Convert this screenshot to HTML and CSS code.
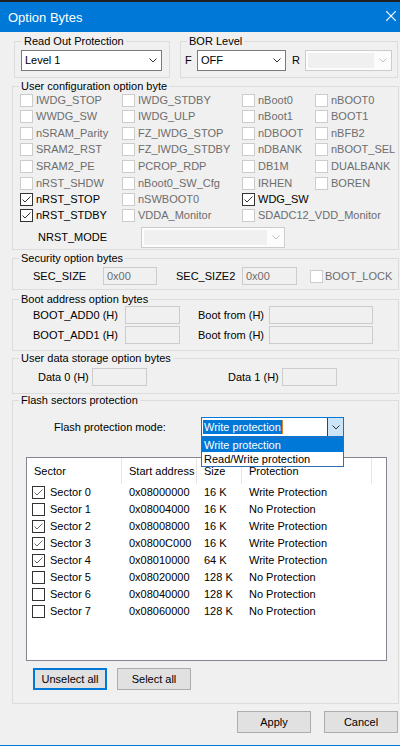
FILE: index.html
```html
<!DOCTYPE html>
<html lang="en">
<head>
    <meta charset="UTF-8">
    <meta name="viewport" content="width=device-width, initial-scale=1.0">
    <title>Option Bytes</title>
    <link rel="stylesheet" href="styles.css">
</head>
<body>
<div class="window">
    <div class="titlebar">
        <span class="title">Option Bytes</span>
        <svg class="close" width="10" height="10" viewBox="0 0 10 10"><path d="M0 0L10 10M10 0L0 10" stroke="#fff" stroke-width="1.2"/></svg>
    </div>

    <div class="panel">
        <div class="top-row">
            <div class="group rop">
                <div class="group-title">Read Out Protection</div>
                <div class="select rop-select">
                    <span>Level 1</span>
                    <svg width="8" height="5" viewBox="0 0 8 5"><polyline points="0.5,0.5 4,4 7.5,0.5" fill="none" stroke="#333"/></svg>
                </div>
            </div>
            <div class="group bor">
                <div class="group-title">BOR Level</div>
                <div class="bor-row">
                    <span class="bor-f-label">F</span>
                    <div class="select bor-f">
                        <span>OFF</span>
                        <svg width="8" height="5" viewBox="0 0 8 5"><polyline points="0.5,0.5 4,4 7.5,0.5" fill="none" stroke="#333"/></svg>
                    </div>
                    <span class="bor-r-label">R</span>
                    <div class="select disabled bor-r">
                        <span class="field"></span>
                        <svg width="8" height="5" viewBox="0 0 8 5"><polyline points="0.5,0.5 4,4 7.5,0.5" fill="none" stroke="#bfbfbf"/></svg>
                    </div>
                </div>
            </div>
        </div>

        <div class="group user-config">
            <div class="group-title">User configuration option byte</div>
            <div class="options">
                <label class="opt"><span class="cb"></span>IWDG_STOP</label>
                <label class="opt"><span class="cb"></span>IWDG_STDBY</label>
                <label class="opt"><span class="cb"></span>nBoot0</label>
                <label class="opt"><span class="cb"></span>nBOOT0</label>

                <label class="opt"><span class="cb"></span>WWDG_SW</label>
                <label class="opt"><span class="cb"></span>IWDG_ULP</label>
                <label class="opt"><span class="cb"></span>nBoot1</label>
                <label class="opt"><span class="cb"></span>BOOT1</label>

                <label class="opt"><span class="cb"></span>nSRAM_Parity</label>
                <label class="opt"><span class="cb"></span>FZ_IWDG_STOP</label>
                <label class="opt"><span class="cb"></span>nDBOOT</label>
                <label class="opt"><span class="cb"></span>nBFB2</label>

                <label class="opt"><span class="cb"></span>SRAM2_RST</label>
                <label class="opt"><span class="cb"></span>FZ_IWDG_STDBY</label>
                <label class="opt"><span class="cb"></span>nDBANK</label>
                <label class="opt"><span class="cb"></span>nBOOT_SEL</label>

                <label class="opt"><span class="cb"></span>SRAM2_PE</label>
                <label class="opt"><span class="cb"></span>PCROP_RDP</label>
                <label class="opt"><span class="cb"></span>DB1M</label>
                <label class="opt"><span class="cb"></span>DUALBANK</label>

                <label class="opt"><span class="cb"></span>nRST_SHDW</label>
                <label class="opt"><span class="cb"></span>nBoot0_SW_Cfg</label>
                <label class="opt"><span class="cb"></span>IRHEN</label>
                <label class="opt"><span class="cb"></span>BOREN</label>

                <label class="opt on"><span class="cb on"><svg width="11" height="11" viewBox="0 0 11 11"><polyline points="1.5,5.5 4,8 9.5,2.5" fill="none" stroke="#333"/></svg></span>nRST_STOP</label>
                <label class="opt"><span class="cb"></span>nSWBOOT0</label>
                <label class="opt on"><span class="cb on"><svg width="11" height="11" viewBox="0 0 11 11"><polyline points="1.5,5.5 4,8 9.5,2.5" fill="none" stroke="#333"/></svg></span>WDG_SW</label>
                <span></span>

                <label class="opt on"><span class="cb on"><svg width="11" height="11" viewBox="0 0 11 11"><polyline points="1.5,5.5 4,8 9.5,2.5" fill="none" stroke="#333"/></svg></span>nRST_STDBY</label>
                <label class="opt"><span class="cb"></span>VDDA_Monitor</label>
                <label class="opt span2"><span class="cb"></span>SDADC12_VDD_Monitor</label>
            </div>
            <div class="nrst-row">
                <span class="nrst-label">NRST_MODE</span>
                <div class="select disabled nrst-select">
                    <span class="field"></span>
                    <svg width="8" height="5" viewBox="0 0 8 5"><polyline points="0.5,0.5 4,4 7.5,0.5" fill="none" stroke="#bfbfbf"/></svg>
                </div>
            </div>
        </div>

        <div class="group security">
            <div class="group-title">Security option bytes</div>
            <div class="field-row sec-row">
                <span class="sec-label">SEC_SIZE</span>
                <span class="input sec-input">0x00</span>
                <span class="sec2-label">SEC_SIZE2</span>
                <span class="input sec2-input">0x00</span>
                <label class="opt boot-lock"><span class="cb"></span>BOOT_LOCK</label>
            </div>
        </div>

        <div class="group boot">
            <div class="group-title">Boot address option bytes</div>
            <div class="field-row boot-row">
                <span class="boot-label">BOOT_ADD0 (H)</span>
                <span class="input boot-input"></span>
                <span class="from-label">Boot from (H)</span>
                <span class="input from-input"></span>
            </div>
            <div class="field-row boot-row second">
                <span class="boot-label">BOOT_ADD1 (H)</span>
                <span class="input boot-input"></span>
                <span class="from-label">Boot from (H)</span>
                <span class="input from-input"></span>
            </div>
        </div>

        <div class="group userdata">
            <div class="group-title">User data storage option bytes</div>
            <div class="field-row data-row">
                <span class="data-label">Data 0 (H)</span>
                <span class="input data-input"></span>
                <span class="data-label data1">Data 1 (H)</span>
                <span class="input data-input"></span>
            </div>
        </div>

        <div class="group flash">
            <div class="group-title">Flash sectors protection</div>
            <div class="mode-row">
                <span class="mode-label">Flash protection mode:</span>
                <div class="combo">
                    <div class="combo-text"><span class="selected">Write protection</span><span class="caret"></span></div>
                    <div class="combo-btn">
                        <svg width="8" height="5" viewBox="0 0 8 5"><polyline points="0.5,0.5 4,4 7.5,0.5" fill="none" stroke="#333"/></svg>
                    </div>
                    <div class="dropdown">
                        <div class="item active">Write protection</div>
                        <div class="item">Read/Write protection</div>
                    </div>
                </div>
            </div>

            <div class="list">
                <div class="list-head">
                    <span>Sector</span>
                    <span>Start address</span>
                    <span>Size</span>
                    <span>Protection</span>
                </div>
                <div class="list-row">
                    <span class="sector"><span class="cb on"><svg width="11" height="11" viewBox="0 0 11 11"><polyline points="1.5,5.5 4,8 9.5,2.5" fill="none" stroke="#666"/></svg></span>Sector 0</span>
                    <span>0x08000000</span><span>16 K</span><span>Write Protection</span>
                </div>
                <div class="list-row">
                    <span class="sector"><span class="cb on"></span>Sector 1</span>
                    <span>0x08004000</span><span>16 K</span><span>No Protection</span>
                </div>
                <div class="list-row">
                    <span class="sector"><span class="cb on"><svg width="11" height="11" viewBox="0 0 11 11"><polyline points="1.5,5.5 4,8 9.5,2.5" fill="none" stroke="#666"/></svg></span>Sector 2</span>
                    <span>0x08008000</span><span>16 K</span><span>Write Protection</span>
                </div>
                <div class="list-row">
                    <span class="sector"><span class="cb on"><svg width="11" height="11" viewBox="0 0 11 11"><polyline points="1.5,5.5 4,8 9.5,2.5" fill="none" stroke="#666"/></svg></span>Sector 3</span>
                    <span>0x0800C000</span><span>16 K</span><span>Write Protection</span>
                </div>
                <div class="list-row">
                    <span class="sector"><span class="cb on"><svg width="11" height="11" viewBox="0 0 11 11"><polyline points="1.5,5.5 4,8 9.5,2.5" fill="none" stroke="#666"/></svg></span>Sector 4</span>
                    <span>0x08010000</span><span>64 K</span><span>Write Protection</span>
                </div>
                <div class="list-row">
                    <span class="sector"><span class="cb on"></span>Sector 5</span>
                    <span>0x08020000</span><span>128 K</span><span>No Protection</span>
                </div>
                <div class="list-row">
                    <span class="sector"><span class="cb on"></span>Sector 6</span>
                    <span>0x08040000</span><span>128 K</span><span>No Protection</span>
                </div>
                <div class="list-row">
                    <span class="sector"><span class="cb on"></span>Sector 7</span>
                    <span>0x08060000</span><span>128 K</span><span>No Protection</span>
                </div>
            </div>

            <div class="btn-row">
                <span class="btn focus">Unselect all</span>
                <span class="btn">Select all</span>
            </div>
        </div>

        <div class="dialog-buttons">
            <span class="btn">Apply</span>
            <span class="btn">Cancel</span>
        </div>
    </div>
</div>
</body>
</html>
```

FILE: styles.css
```css
body {
    margin: 0;
    background: #f0f0f0;
    font-family: "Liberation Sans", Arial, sans-serif;
    font-size: 11px;
    line-height: 13px;
    color: #000;
}
.window {
    width: 400px;
    height: 746px;
    box-sizing: border-box;
    border-bottom: 1px solid #0078d7;
    overflow: hidden;
}
.titlebar {
    height: 30px;
    border-top: 2px solid #1f1f1f;
    background: #0078d7;
    color: #fff;
    font-size: 13px;
    display: flex;
    align-items: center;
    justify-content: space-between;
}
.title {
    padding-left: 8px;
}
.close {
    margin: 0 4px 2px 0;
}
.panel {
    padding-left: 12px;
}

/* group boxes */
.group {
    width: 387px;
    border: 1px solid #dcdcdc;
    box-sizing: border-box;
}
.group-title {
    width: max-content;
    margin: -7px 0 0 6px;
    padding: 0 2px;
    background: #f0f0f0;
}
.top-row {
    display: flex;
    gap: 10px;
    margin: 9px 0 0 2px;
}
.rop {
    width: 156px;
    height: 37px;
}
.rop .group-title {
    margin-left: 7px;
}
.rop-select {
    width: 141px;
    margin: 2px 0 0 6px;
}
.bor {
    width: 218px;
    height: 37px;
}
.bor-row {
    display: flex;
    align-items: center;
    margin-top: 2px;
    padding-left: 4px;
}
.bor-f-label {
    width: 12px;
}
.bor-f {
    width: 89px;
}
.bor-r-label {
    width: 13px;
    margin-left: 6px;
}
.bor-r {
    width: 87px;
}

/* combo boxes */
.select {
    height: 21px;
    box-sizing: border-box;
    border: 1px solid #7a7a7a;
    background: #fff;
    display: flex;
    align-items: center;
    justify-content: space-between;
    padding: 0 4px 0 3px;
}
.select svg {
    flex: none;
}
.select.disabled {
    border-color: #cccccc;
    background: #fcfcfc;
    padding: 2px 4px 2px 2px;
    align-items: stretch;
}
.select.disabled svg {
    align-self: center;
    margin-left: 5px;
}
.field {
    flex: 1;
    background: #f0f0f0;
}

/* check boxes */
.cb {
    width: 13px;
    height: 13px;
    box-sizing: border-box;
    border: 1px solid #cccccc;
    background: #fff;
    flex: none;
}
.cb.on {
    border-color: #333;
}
.cb svg {
    display: block;
}
.user-config {
    height: 164px;
    margin-top: 8px;
}
.options {
    display: grid;
    grid-template-columns: 102px 120px 73px 1fr;
    grid-template-rows: 15px 17px 16px 16px 18px 16px 16px 17px;
    padding-left: 7px;
}
.opt {
    display: flex;
    align-items: center;
    gap: 3px;
    color: #6d6d6d;
    white-space: nowrap;
}
.opt.on {
    color: #000;
}
.span2 {
    grid-column: span 2;
}
.nrst-row {
    display: flex;
    align-items: center;
    margin-top: 3px;
    padding-left: 25px;
}
.nrst-label {
    width: 103px;
}
.nrst-select {
    width: 144px;
}

/* text fields */
.field-row {
    display: flex;
    align-items: center;
    margin-top: 2px;
    white-space: nowrap;
}
.input {
    height: 18px;
    box-sizing: border-box;
    border: 1px solid #cccccc;
    background: #f0f0f0;
    color: #6d6d6d;
    padding: 2px 0 0 3px;
    flex: none;
}
.security {
    height: 32px;
    margin-top: 8px;
}
.sec-row {
    padding-left: 20px;
}
.sec-label {
    width: 70px;
}
.sec-input {
    width: 54px;
}
.sec2-label {
    width: 66px;
    margin-left: 19px;
}
.sec2-input {
    width: 55px;
}
.boot-lock {
    margin-left: 13px;
    gap: 2px;
}
.boot {
    height: 52px;
    margin-top: 9px;
}
.boot-row {
    margin-top: 0;
    padding-left: 20px;
}
.boot-row.second {
    margin-top: 2px;
}
.boot-label {
    width: 92px;
}
.boot-input {
    width: 55px;
}
.from-label {
    width: 71px;
    margin-left: 18px;
}
.from-input {
    width: 104px;
}
.userdata {
    height: 36px;
    margin-top: 7px;
}
.data-row {
    margin-top: 3px;
    padding-left: 25px;
}
.data-label {
    width: 54px;
}
.data-label.data1 {
    margin-left: 81px;
}
.data-input {
    width: 55px;
}

/* flash sectors */
.flash {
    height: 304px;
    margin-top: 6px;
}
.mode-row {
    display: flex;
    align-items: center;
    margin-top: 10px;
    padding-left: 41px;
}
.mode-label {
    width: 147px;
}
.combo {
    position: relative;
    width: 143px;
    height: 20px;
    box-sizing: border-box;
    border: 1px solid #0078d7;
    background: #fff;
    display: flex;
}
.combo-text {
    flex: 1;
    display: flex;
    align-items: center;
    padding-left: 1px;
}
.selected {
    background: #0078d7;
    color: #fff;
    padding: 0 1px;
    line-height: 14px;
}
.caret {
    width: 1px;
    height: 14px;
    background: #d9822b;
}
.combo-btn {
    width: 16px;
    box-sizing: border-box;
    background: #cce4f7;
    border-left: 1px solid #005499;
    display: flex;
    align-items: center;
    justify-content: center;
}
.dropdown {
    position: absolute;
    left: -1px;
    top: 19px;
    width: 143px;
    box-sizing: border-box;
    border: 1px solid #2a6fb8;
    background: #fff;
    z-index: 2;
}
.item {
    height: 14px;
    line-height: 14px;
    padding-left: 2px;
}
.item.active {
    background: #0078d7;
    color: #fff;
}
.list {
    width: 361px;
    height: 204px;
    box-sizing: border-box;
    margin: 20px 0 0 13px;
    border: 1px solid #828790;
    background: #fff;
}
.list-head,
.list-row {
    display: grid;
    grid-template-columns: 95px 75px 45px 130px;
    white-space: nowrap;
}
.list-head {
    height: 26px;
    line-height: 26px;
}
.list-head span {
    padding-left: 7px;
    border-right: 1px solid #e5e5e5;
}
.list-row {
    height: 17px;
    align-items: center;
}
.list-row span {
    padding-left: 7px;
}
.list-row .sector {
    display: flex;
    align-items: center;
    gap: 5px;
    padding-left: 5px;
}
.list-row .cb {
    padding: 0;
}

/* buttons */
.btn-row {
    display: flex;
    gap: 10px;
    margin: 7px 0 0 20px;
}
.btn {
    width: 74px;
    height: 22px;
    box-sizing: border-box;
    border: 1px solid #adadad;
    background: #e1e1e1;
    display: flex;
    align-items: center;
    justify-content: center;
}
.btn.focus {
    border: 2px solid #0078d7;
}
.dialog-buttons {
    display: flex;
    justify-content: flex-end;
    gap: 13px;
    margin-top: 7px;
    padding-right: 2px;
}
```
